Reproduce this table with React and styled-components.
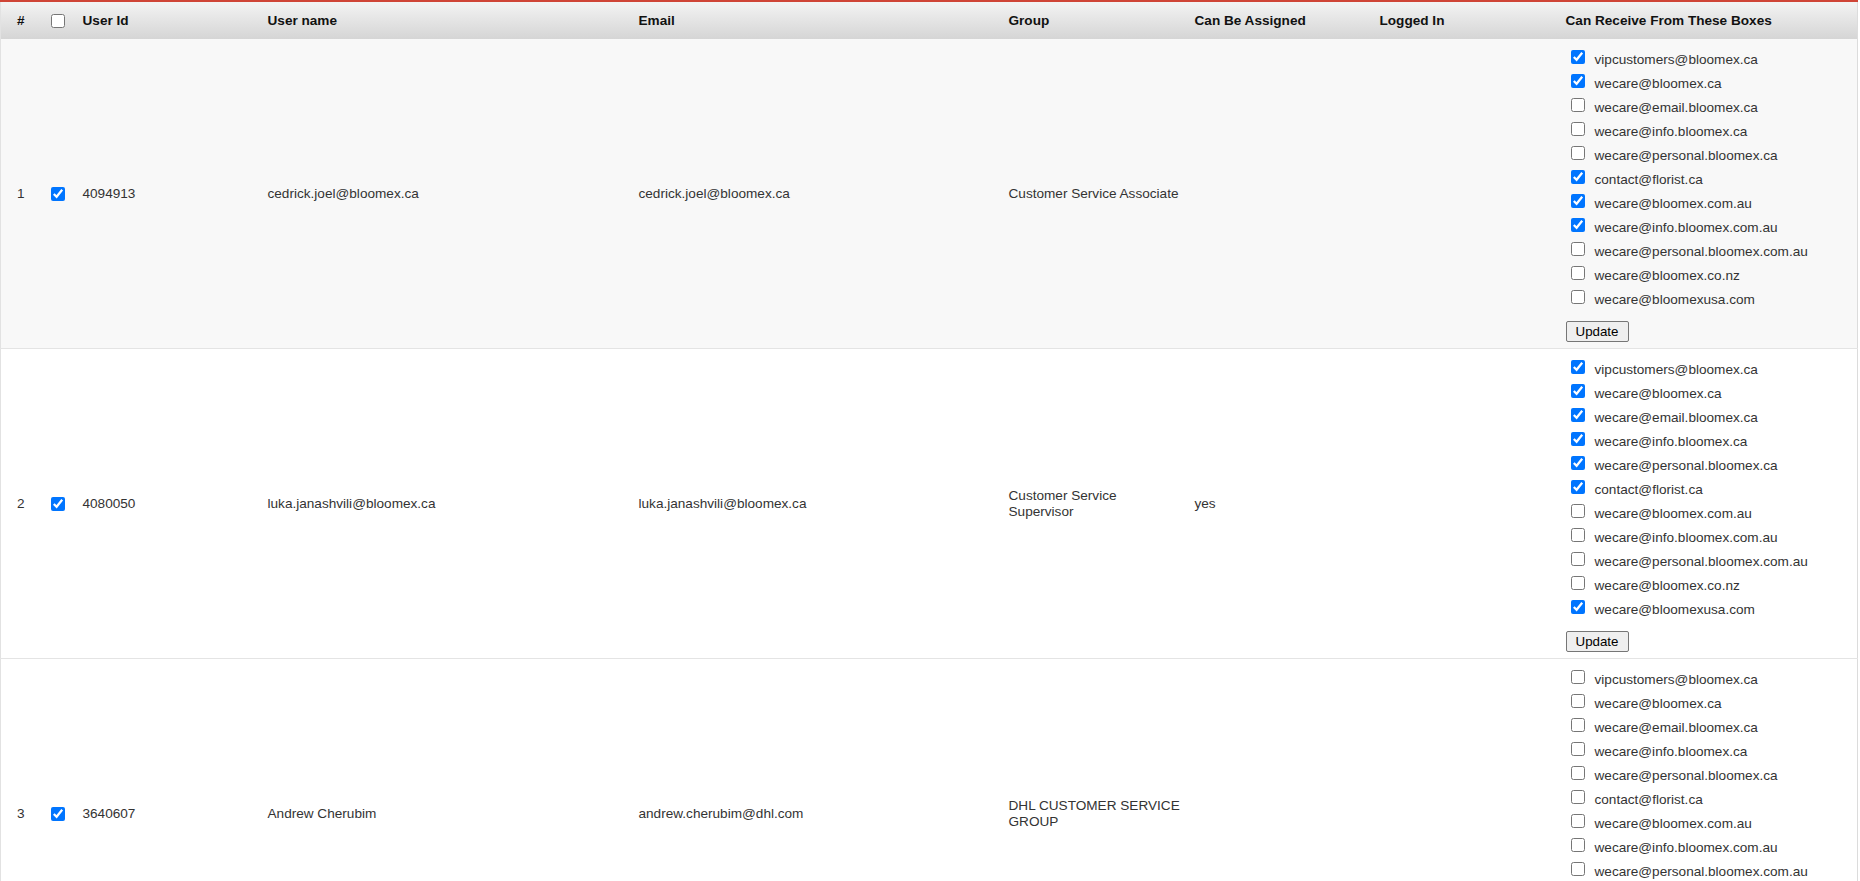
import React from "react";
import styled, { createGlobalStyle } from "styled-components";

const GlobalStyle = createGlobalStyle`
  body {
    margin: 0;
    background: #fff;
    font-family: "Liberation Sans", Arial, sans-serif;
  }
`;

const BOXES = [
  "vipcustomers@bloomex.ca",
  "wecare@bloomex.ca",
  "wecare@email.bloomex.ca",
  "wecare@info.bloomex.ca",
  "wecare@personal.bloomex.ca",
  "contact@florist.ca",
  "wecare@bloomex.com.au",
  "wecare@info.bloomex.com.au",
  "wecare@personal.bloomex.com.au",
  "wecare@bloomex.co.nz",
  "wecare@bloomexusa.com",
];

const users = [
  {
    id: "4094913",
    username: "cedrick.joel@bloomex.ca",
    email: "cedrick.joel@bloomex.ca",
    group: "Customer Service Associate",
    assigned: "",
    logged: "",
    boxes: [1, 1, 0, 0, 0, 1, 1, 1, 0, 0, 0],
  },
  {
    id: "4080050",
    username: "luka.janashvili@bloomex.ca",
    email: "luka.janashvili@bloomex.ca",
    group: "Customer Service Supervisor",
    assigned: "yes",
    logged: "",
    boxes: [1, 1, 1, 1, 1, 1, 0, 0, 0, 0, 1],
  },
  {
    id: "3640607",
    username: "Andrew Cherubim",
    email: "andrew.cherubim@dhl.com",
    group: "DHL CUSTOMER SERVICE GROUP",
    assigned: "",
    logged: "",
    boxes: [0, 0, 0, 0, 0, 0, 0, 0, 0, 0, 0],
  },
];

const columns = [
  { label: "#", width: 44 },
  { label: "", width: 30, check: true },
  { label: "User Id", width: 185 },
  { label: "User name", width: 371 },
  { label: "Email", width: 370 },
  { label: "Group", width: 186 },
  { label: "Can Be Assigned", width: 185 },
  { label: "Logged In", width: 186 },
  { label: "Can Receive From These Boxes", width: 300 },
];

const App = () => {
  return (
    <>
      <GlobalStyle />
      <UsersTable>
        <colgroup>
          {columns.map((col, i) => (
            <col key={i} style={{ width: col.width }} />
          ))}
        </colgroup>
        <thead>
          <HeadRow>
            {columns.map((col, i) => (
              <HeadCell key={i} $first={i === 0} $check={col.check}>
                {col.check ? <RowCheck type="checkbox" /> : col.label}
              </HeadCell>
            ))}
          </HeadRow>
        </thead>
        <tbody>
          {users.map((user, idx) => (
            // first row is the hovered one in the screenshot
            <Row key={user.id} $hover={idx === 0}>
              <NumCell>{idx + 1}</NumCell>
              <CheckCell>
                <RowCheck type="checkbox" defaultChecked />
              </CheckCell>
              <Cell>{user.id}</Cell>
              <Cell>{user.username}</Cell>
              <Cell>{user.email}</Cell>
              <GroupCell>{user.group}</GroupCell>
              <Cell>{user.assigned}</Cell>
              <Cell>{user.logged}</Cell>
              <BoxesCell>
                <BoxList>
                  {BOXES.map((box, b) => (
                    <BoxItem key={box}>
                      <BoxCheck type="checkbox" defaultChecked={!!user.boxes[b]} />
                      <span>{box}</span>
                    </BoxItem>
                  ))}
                </BoxList>
                <UpdateButton>Update</UpdateButton>
              </BoxesCell>
            </Row>
          ))}
        </tbody>
      </UsersTable>
    </>
  );
};

const UsersTable = styled.table`
  width: 1857px;
  table-layout: fixed;
  border-collapse: collapse;
  border-top: 2px solid #cf4436;
  border-left: 1px solid #e2e2e2;
  border-right: 1px solid #dcdcdc;
  font-size: 13.6px;
  color: #333;
`;

const HeadRow = styled.tr`
  height: 38px;
  background: linear-gradient(#f4f4f4, #d5d5d5);
`;

const HeadCell = styled.th`
  padding: 0 8px;
  padding-left: ${(p) => (p.$first ? "16px" : p.$check ? "6px" : "8px")};
  text-align: left;
  vertical-align: middle;
  font-weight: bold;
  font-size: 13.6px;
  color: #111;
  white-space: nowrap;
`;

const Row = styled.tr`
  background: ${(p) => (p.$hover ? "#f8f8f8" : "#fff")};
  border-bottom: 1px solid #e4e4e4;
`;

const Cell = styled.td`
  padding: 0 8px;
  vertical-align: middle;
  line-height: 1.15;
`;

const NumCell = styled(Cell)`
  padding-left: 16px;
`;

const CheckCell = styled(Cell)`
  padding-left: 6px;
`;

const GroupCell = styled(Cell)`
  padding-right: 2px;
`;

const RowCheck = styled.input`
  display: block;
  width: 14px;
  height: 14px;
  margin: 0;
`;

const BoxesCell = styled(Cell)`
  padding-top: 8px;
  padding-bottom: 6px;
`;

const BoxList = styled.div`
  display: flex;
  flex-direction: column;
`;

const BoxItem = styled.label`
  display: flex;
  align-items: flex-start;
  height: 24px;
  line-height: 25px;
  font-size: 13.6px;
  color: #333;
`;

const BoxCheck = styled.input`
  width: 14px;
  height: 14px;
  margin: 3px 10px 0 5px;
  flex-shrink: 0;
`;

const UpdateButton = styled.button`
  display: block;
  margin-top: 10px;
  height: 21px;
  width: 63px;
  padding: 0;
  font-family: "Liberation Sans", Arial, sans-serif;
  font-size: 13.33px;
  color: #000;
  background: #efefef;
  border: 1px solid #767676;
  border-radius: 2px;
`;

export default App;
